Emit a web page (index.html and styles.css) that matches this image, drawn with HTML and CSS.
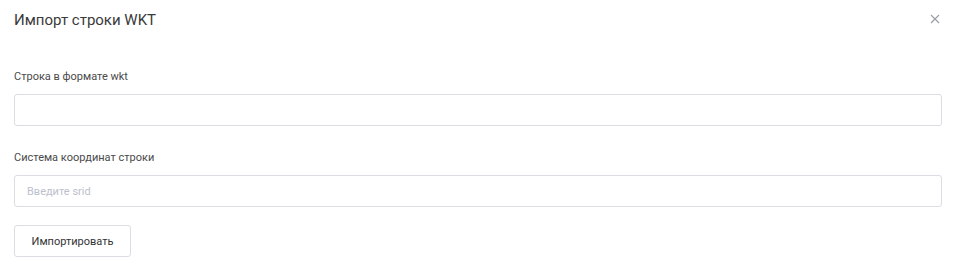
FILE: index.html
```html
<!DOCTYPE html>
<html lang="ru">
<head>
<meta charset="utf-8">
<link rel="stylesheet" href="styles.css">
<title>Импорт строки WKT</title>
</head>
<body>
<div class="dialog">
  <div class="header">
    <div class="title">Импорт строки WKT</div>
    <button class="close" aria-label="Закрыть">
      <svg width="10" height="10" viewBox="0 0 10 10"><path d="M1 1L9 9M9 1L1 9" stroke="#9a9ca3" stroke-width="1.1" fill="none"/></svg>
    </button>
  </div>
  <div class="body">
    <div class="field">
      <label class="label">Строка в формате wkt</label>
      <input class="input" type="text">
    </div>
    <div class="field">
      <label class="label">Система координат строки</label>
      <input class="input" type="text" placeholder="Введите srid">
    </div>
    <button class="btn">Импортировать</button>
  </div>
</div>
</body>
</html>
```
FILE: styles.css
```css
* { box-sizing: border-box; }
html, body { margin: 0; padding: 0; background: #fff; }
body { font-family: Roboto, "Noto Sans", sans-serif; color: #333; }
.dialog { width: 955px; height: 276px; padding: 0 13px 0 14px; }
.header { display: flex; justify-content: space-between; align-items: flex-start; padding-top: 10px; height: 70px; }
.title { font-size: 15px; line-height: 20px; color: #3a3a3a; }
.close { border: 0; background: none; padding: 0; margin: 3px 1px 0 0; width: 12px; height: 12px; display: flex; align-items: center; justify-content: center; cursor: pointer; }
.body { display: flex; flex-direction: column; }
.field { display: flex; flex-direction: column; margin-bottom: 25px; }
.field:last-of-type { margin-bottom: 18px; }
.label { font-size: 11px; line-height: 14px; color: #4a4a4a; margin-bottom: 10px; }
.input { height: 32px; border: 1px solid #dcdce4; border-radius: 3px; padding: 0 12px; font-family: inherit; font-size: 11px; color: #333; outline: none; width: 100%; }
.input::placeholder { color: #bcc0cc; }
.btn { align-self: flex-start; height: 32px; width: 117px; border: 1px solid #dcdce4; border-radius: 3px; background: #fff; font-family: inherit; font-size: 11px; color: #333; padding: 0; }
```
